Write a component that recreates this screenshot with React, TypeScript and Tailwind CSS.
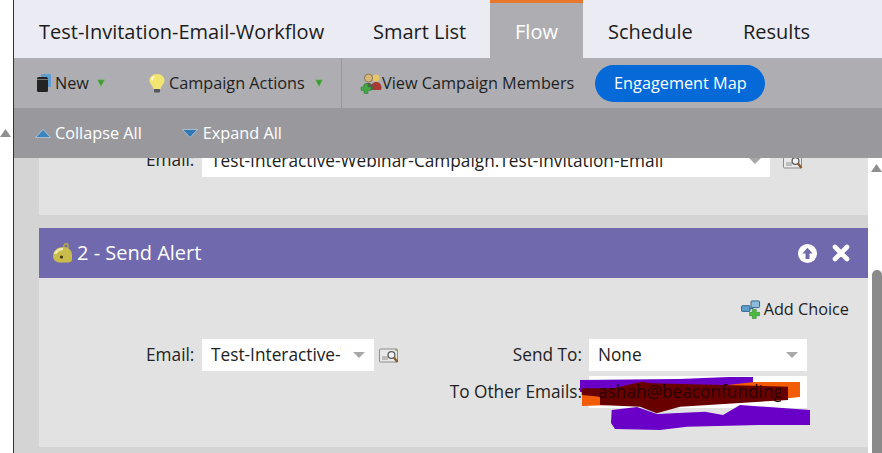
const font = { fontFamily: '"Open Sans", sans-serif' };

const GreenArrow = () => (
  <svg width="8" height="8" viewBox="0 0 8 8" className="block shrink-0">
    <path d="M0.3 0.8 H7.7 L4 7.8 Z" fill="#3f9a35" stroke="#86bf76" strokeWidth="0.6" />
  </svg>
);

const SelectArrow = () => (
  <svg width="12" height="6" viewBox="0 0 12 6" className="shrink-0">
    <path d="M0 0 H12 L6 6 Z" fill="#a8a8a8" />
  </svg>
);

const NewIcon = () => (
  <svg width="16" height="20" viewBox="0 0 16 20" className="shrink-0">
    <path d="M5 1 H15 V14 H12 V4 H5 Z" fill="#5f9fd0" />
    <rect x="1" y="4" width="11" height="15" rx="1.5" fill="#242424" />
    <rect x="1" y="6" width="11" height="1" fill="#777" />
  </svg>
);

const BulbIcon = () => (
  <svg width="16" height="21" viewBox="0 0 16 21" className="block shrink-0">
    <path d="M8 1 C3.5 1 0.5 4 0.5 7.5 C0.5 11 4 12.5 4.5 16 H11.5 C12 12.5 15.5 11 15.5 7.5 C15.5 4 12.5 1 8 1 Z" fill="#f3e56f" />
    <path d="M5 3.5 C3.5 4.5 3 6 3 7.5" stroke="#fdf9cf" strokeWidth="2" fill="none" />
    <rect x="5" y="16" width="6" height="3.5" rx="1" fill="#55555a" />
  </svg>
);

const MembersIcon = () => (
  <svg width="22" height="21" viewBox="0 0 22 21" className="block shrink-0">
    <circle cx="16" cy="5" r="3.5" fill="#e7c763" />
    <path d="M11 17 C11 11 13 9 16 9 C19 9 21.5 11 21.5 15 L21 17 Z" fill="#a83a34" />
    <circle cx="8.5" cy="5" r="4" fill="#d9b77a" stroke="#7a6a3a" strokeWidth="0.8" />
    <path d="M3 16 C3 12 5.5 10 8.5 10 C11.5 10 13.5 12 13.5 17 H3.5 Z" fill="#56604a" />
    <path d="M4 11 H8 V14 H11 V17.5 H8 V20.5 H4 V17.5 H1 V14 H4 Z" fill="#44a644" stroke="#2f7d34" strokeWidth="0.5" />
  </svg>
);

const CollapseIcon = () => (
  <svg width="16" height="9" viewBox="0 0 16 9" className="shrink-0">
    <path d="M8 0.5 L15.5 8.5 H0.5 Z" fill="#3b83bd" stroke="#d4e2ee" strokeWidth="0.6" />
  </svg>
);

const ExpandIcon = () => (
  <svg width="16" height="9" viewBox="0 0 16 9" className="block shrink-0">
    <path d="M0.5 0.5 H15.5 L8 8.5 Z" fill="#2f78b4" stroke="#d4e2ee" strokeWidth="0.6" />
  </svg>
);

const BellIcon = () => (
  <svg width="21" height="20" viewBox="0 0 21 20" className="shrink-0">
    <circle cx="14" cy="3" r="2.2" fill="none" stroke="#b7a94a" strokeWidth="1.4" />
    <path d="M1 13 C1 8 5 4 11 4 C16.5 4 20 7.5 20 12 V16.5 C20 18.5 18.5 19.5 16 19.5 H8 C4 19.5 1 17 1 13 Z" fill="#c9bb4c" />
    <path d="M3 11 C4.5 8 8 6 11 6" stroke="#f1ecb0" strokeWidth="2.6" fill="none" />
    <circle cx="9.5" cy="14" r="1.6" fill="#3e3a12" />
  </svg>
);

const LookupIcon = () => (
  <svg width="20" height="18" viewBox="0 0 20 18" className="block shrink-0">
    <rect x="0.5" y="2" width="18" height="13" rx="1" fill="#e8e8e8" stroke="#8d8d8d" />
    <rect x="3" y="9" width="6" height="4" fill="#bdbdbd" />
    <circle cx="12.5" cy="8" r="3.4" fill="#f4f4f4" stroke="#5c5c5c" strokeWidth="1.3" />
    <path d="M15 10.5 L18.5 15" stroke="#8a5a2c" strokeWidth="2.2" />
    <circle cx="17" cy="3" r="1" fill="#7da23c" />
  </svg>
);

const AddChoiceIcon = () => (
  <svg width="20" height="19" viewBox="0 0 21 20" className="shrink-0">
    <rect x="0.5" y="6" width="9" height="6" rx="1" fill="#5f9fc9" stroke="#2c6288" />
    <rect x="10.5" y="1" width="9" height="7" rx="1" fill="#8cbbdc" stroke="#2c6288" />
    <path d="M9 9 H13" stroke="#2c6288" />
    <path d="M12 10 H16 V13 H19.5 V16.5 H16 V19.5 H12 V16.5 H9 V13 H12 Z" fill="#4cbb3f" stroke="#2f8430" strokeWidth="0.6" />
  </svg>
);

const UpCircle = () => (
  <svg width="19" height="19" viewBox="0 0 19 19" className="shrink-0">
    <circle cx="9.5" cy="9.5" r="9.5" fill="#fff" />
    <path d="M9.5 3.8 L14.5 9.5 H11.5 V15 H7.5 V9.5 H4.5 Z" fill="#7069ae" />
  </svg>
);

const CloseX = () => (
  <svg width="18" height="18" viewBox="0 0 18 18" className="shrink-0">
    <path d="M3 3 L15 15 M15 3 L3 15" stroke="#fff" strokeWidth="4.6" strokeLinecap="round" />
  </svg>
);

const ScrollUp = ({ className }: { className: string }) => (
  <svg width="11" height="8" viewBox="0 0 11 8" className={className}>
    <path d="M5.5 0 L11 8 H0 Z" fill="#8f8f8f" />
  </svg>
);

// marker scribbles someone drew over the email address
const Scribble = () => (
  <svg width="240" height="60" viewBox="0 0 240 60" className="pointer-events-none absolute left-[-10px] top-0">
    <path d="M1 4 L100 3 L150 1 L174 1 L174 14 L1 16 Z" fill="#6a00c8" />
    <path d="M3 19 L60 19 L175 6 L221 6 L221 21 L190 24 L60 28 L3 30 Z" fill="#f25c05" />
    <path d="M2.7 12.3 L34 12.3 L62.7 5.7 L71 7.3 L209 10.7 L209 24 L101 30.7 L77.7 37.3 L61 30.7 L21 29 L21 20.7 L2.7 19 Z" fill="#690000" />
    <path d="M32.7 34 L58 31 L78 38 L126 35.7 L144 39 L161 29 L231 34 L231 49 L180 49 L108 50.7 L81 54 L36 53 L32 47 Z" fill="#6a00c8" />
  </svg>
);

export default function App() {
  return (
    <div className="flex h-[453px] w-[882px] overflow-hidden bg-white text-[16.25px] text-[#222]" style={font}>
      {/* left gutter */}
      <div className="w-[14px] shrink-0 border-r border-[#333] pt-[129px]">
        <ScrollUp className="block" />
      </div>

      <div className="flex min-w-0 flex-1 flex-col">
        {/* tabs */}
        <div className="flex h-[58px] shrink-0 items-center bg-[#ebebf3] pl-[25px] text-[20px] text-[#1c1c1c]">
          <span className="w-[334px] whitespace-nowrap pt-[5px]">Test-Invitation-Email-Workflow</span>
          <span className="w-[117px] pt-[5px]">Smart List</span>
          <span className="flex h-full w-[93px] items-center justify-center border-t-[3px] border-[#e8762d] bg-[#aeaeb2] pt-[2px] text-white">Flow</span>
          <span className="ml-[25px] w-[135px] pt-[5px]">Schedule</span>
          <span className="pt-[5px]">Results</span>
        </div>

        {/* toolbar */}
        <div className="flex h-[50px] shrink-0 items-center bg-[#aeaeb2] text-[#1f1f1f]">
          <div className="flex h-full w-[328px] items-center border-r border-[#98989c] pl-[22px]">
            <NewIcon />
            <span className="ml-[3px]">New</span>
            <span className="ml-[8px]"><GreenArrow /></span>
            <span className="ml-[44px]"><BulbIcon /></span>
            <span className="ml-[4px] whitespace-nowrap">Campaign Actions</span>
            <span className="ml-[10px]"><GreenArrow /></span>
          </div>
          <div className="ml-[18px]"><MembersIcon /></div>
          <span className="whitespace-nowrap">View Campaign Members</span>
          <span className="ml-[21px] flex h-[37px] w-[170px] items-center justify-center rounded-full bg-[#0569d8] text-white">Engagement Map</span>
        </div>

        {/* sub toolbar */}
        <div className="flex h-[50px] shrink-0 items-center bg-[#99999d] pl-[21px] text-white">
          <CollapseIcon />
          <span className="ml-[4px]">Collapse All</span>
          <span className="ml-[40px]"><ExpandIcon /></span>
          <span className="ml-[5px]">Expand All</span>
        </div>

        {/* flow steps */}
        <div className="flex min-h-0 flex-1 overflow-hidden text-[17.25px]">
          <div className="w-[854px] shrink-0 bg-[#d4d4d4] pl-[25px]">
            <div className="flex h-[57px] flex-col bg-[#e2e2e2]">
              <div className="-mt-[13px] flex pl-[107px]">
                <span className="mr-[7px] w-[49px] whitespace-nowrap pt-[2px]">Email:</span>
                <div className="flex h-[32px] w-[568px] items-center justify-between bg-white px-[9px]">
                  <span className="whitespace-nowrap">Test-Interactive-Webinar-Campaign.Test-Invitation-Email</span>
                  <SelectArrow />
                </div>
                <span className="ml-[13px] mt-[8px]"><LookupIcon /></span>
              </div>
            </div>

            <div className="mt-[13px] flex h-[50px] items-center bg-[#7069ae] pl-[13px] pr-[18px] text-white">
              <BellIcon />
              <span className="ml-[4px] text-[20px]">2 - Send Alert</span>
              <div className="ml-auto flex items-center gap-[15px]">
                <UpCircle />
                <CloseX />
              </div>
            </div>

            <div className="h-[169px] bg-[#e2e2e2] pt-[20px]">
              <div className="flex h-[22px] items-center justify-end pr-[19px] text-[16.25px]">
                <AddChoiceIcon />
                <span className="ml-[3px]">Add Choice</span>
              </div>
              <div className="mt-[19px] flex">
                <div className="flex pl-[107px]">
                  <span className="mr-[7px] w-[49px] whitespace-nowrap pt-[3px]">Email:</span>
                  <div className="flex h-[32px] w-[172px] items-center justify-between bg-white px-[9px]">
                    <span className="w-[130px] overflow-hidden whitespace-nowrap">Test-Interactive-Webinar</span>
                    <SelectArrow />
                  </div>
                  <span className="ml-[5px] mt-[8px]"><LookupIcon /></span>
                </div>
                <div className="ml-auto mr-[61px] flex flex-col gap-[5px]">
                  <div className="flex justify-end">
                    <span className="mr-[7px] pt-[3px]">Send To:</span>
                    <div className="flex h-[32px] w-[218px] items-center justify-between bg-white px-[9px]">
                      <span>None</span>
                      <SelectArrow />
                    </div>
                  </div>
                  <div className="flex justify-end">
                    <span className="mr-[7px] whitespace-nowrap pt-[3px]">To Other Emails:</span>
                    <div className="relative flex h-[32px] w-[218px] items-center bg-white pl-[9px]">
                      <Scribble />
                      <span className="relative w-[183px] overflow-hidden whitespace-nowrap text-[#2a0000]">ashah@beaconfunding.com</span>
                    </div>
                  </div>
                </div>
              </div>
            </div>
          </div>

          {/* scrollbar */}
          <div className="flex-1 pl-[3px] pt-[6px]">
            <ScrollUp className="block" />
            <div className="ml-[1px] mt-[98px] h-[190px] rounded-t-[5px] bg-[#8a8a8a]"></div>
          </div>
        </div>
      </div>
    </div>
  );
}
